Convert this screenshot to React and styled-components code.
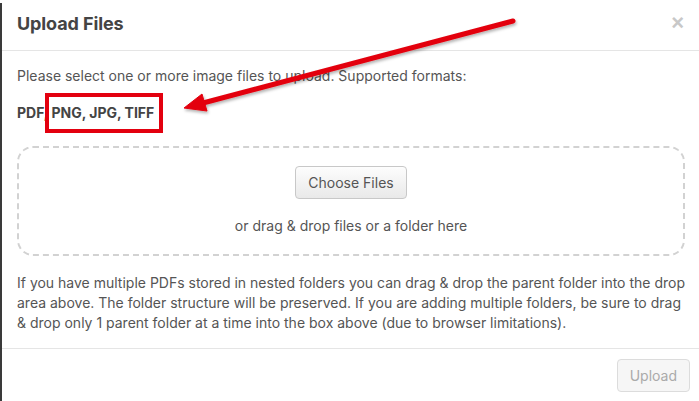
import React from 'react'
import styled, { createGlobalStyle } from 'styled-components'

const GlobalStyle = createGlobalStyle`
  html, body {
    margin: 0;
    padding: 0;
    background: #fff;
    overflow: hidden;
  }
  body {
    font-family: Inter, "Noto Sans", "Liberation Sans", sans-serif;
    -webkit-font-smoothing: antialiased;
  }
`

let Modal = styled.div`
  position: relative;
  width: 698px;
  height: 398px;
  margin-top: 3px;
  border-left: 2px solid #3a3a3a;
  background: #fff;
  display: flex;
  flex-direction: column;
  color: #555;
`

let Header = styled.div`
  height: 46px;
  margin-top: -3px;
  padding: 0 15px 4px;
  display: flex;
  align-items: center;
  justify-content: space-between;
  border-bottom: 1px solid #e5e5e5;
`

let Title = styled.h4`
  margin: 0;
  font-size: 18px;
  font-weight: 700;
  color: #444;
  letter-spacing: -0.1px;
`

let Close = styled.button`
  border: none;
  background: none;
  padding: 0;
  margin-right: 1px;
  font-family: "Liberation Sans", Arial, sans-serif;
  font-size: 22px;
  font-weight: 700;
  line-height: 1;
  color: #c8c8c8;
  cursor: pointer;
`

let Body = styled.div`
  padding: 15px;
  font-size: 14px;
  line-height: 20px;
`

let Para = styled.p`
  margin: 0 0 ${props => props.gap || 0}px;
  font-weight: ${props => props.bold ? 700 : 400};
  color: ${props => props.bold ? '#444' : '#555'};
`

let DropZone = styled.div`
  height: 106px;
  border: 2px dashed #d2d2d2;
  border-radius: 16px;
  display: flex;
  flex-direction: column;
  align-items: center;
  justify-content: center;
  gap: 17px;
  margin-bottom: 17px;
`

let Button = styled.button`
  font-family: inherit;
  font-size: 14px;
  height: 33px;
  padding: 0 12px;
  border-radius: 4px;
  border: 1px solid ${props => props.disabled ? '#dcdcdc' : '#c8c8c8'};
  color: ${props => props.disabled ? '#aaa' : '#555'};
  background: ${props => props.disabled
    ? '#f6f6f6'
    : 'linear-gradient(#fdfdfd, #e9e9e9)'};
`

let Footer = styled.div`
  border-top: 1px solid #e5e5e5;
  padding: 10px 10px 0 0;
  display: flex;
  justify-content: flex-end;
`

// red markup drawn over the screenshot
let Highlight = styled.div`
  position: absolute;
  left: 43px;
  top: 90px;
  width: 110px;
  height: 32px;
  border: 4px solid #e3000f;
`

let Arrow = styled.svg`
  position: absolute;
  left: -2px;
  top: -3px;
  pointer-events: none;
`

function App(){
  return(
  <>
    <GlobalStyle />
    <Modal>
      <Header>
        <Title>Upload Files</Title>
        <Close>×</Close>
      </Header>
      <Body>
        <Para gap={17}>Please select one or more image files to upload. Supported formats:</Para>
        <Para bold gap={23}>PDF, PNG, JPG, TIFF</Para>
        <DropZone>
          <Button>Choose Files</Button>
          <div>or drag &amp; drop files or a folder here</div>
        </DropZone>
        <Para>
          If you have multiple PDFs stored in nested folders you can drag &amp; drop the parent folder into the drop
          area above. The folder structure will be preserved. If you are adding multiple folders, be sure to drag
          &amp; drop only 1 parent folder at a time into the box above (due to browser limitations).
        </Para>
      </Body>
      <Footer>
        <Button disabled>Upload</Button>
      </Footer>
      <Highlight />
      <Arrow width="699" height="401" viewBox="0 0 699 401">
        <defs>
          <filter id="sh" x="-10%" y="-10%" width="120%" height="130%">
            <feDropShadow dx="1" dy="2" stdDeviation="1.5" floodColor="#000" floodOpacity="0.3" />
          </filter>
        </defs>
        <g filter="url(#sh)" fill="#e3000f" stroke="#e3000f">
          <line x1="513" y1="21" x2="203" y2="103" strokeWidth="5" strokeLinecap="round" />
          <polygon points="184,108 207,111 202,94" strokeWidth="1" strokeLinejoin="round" />
        </g>
      </Arrow>
    </Modal>
  </>
  )
}

export default App
